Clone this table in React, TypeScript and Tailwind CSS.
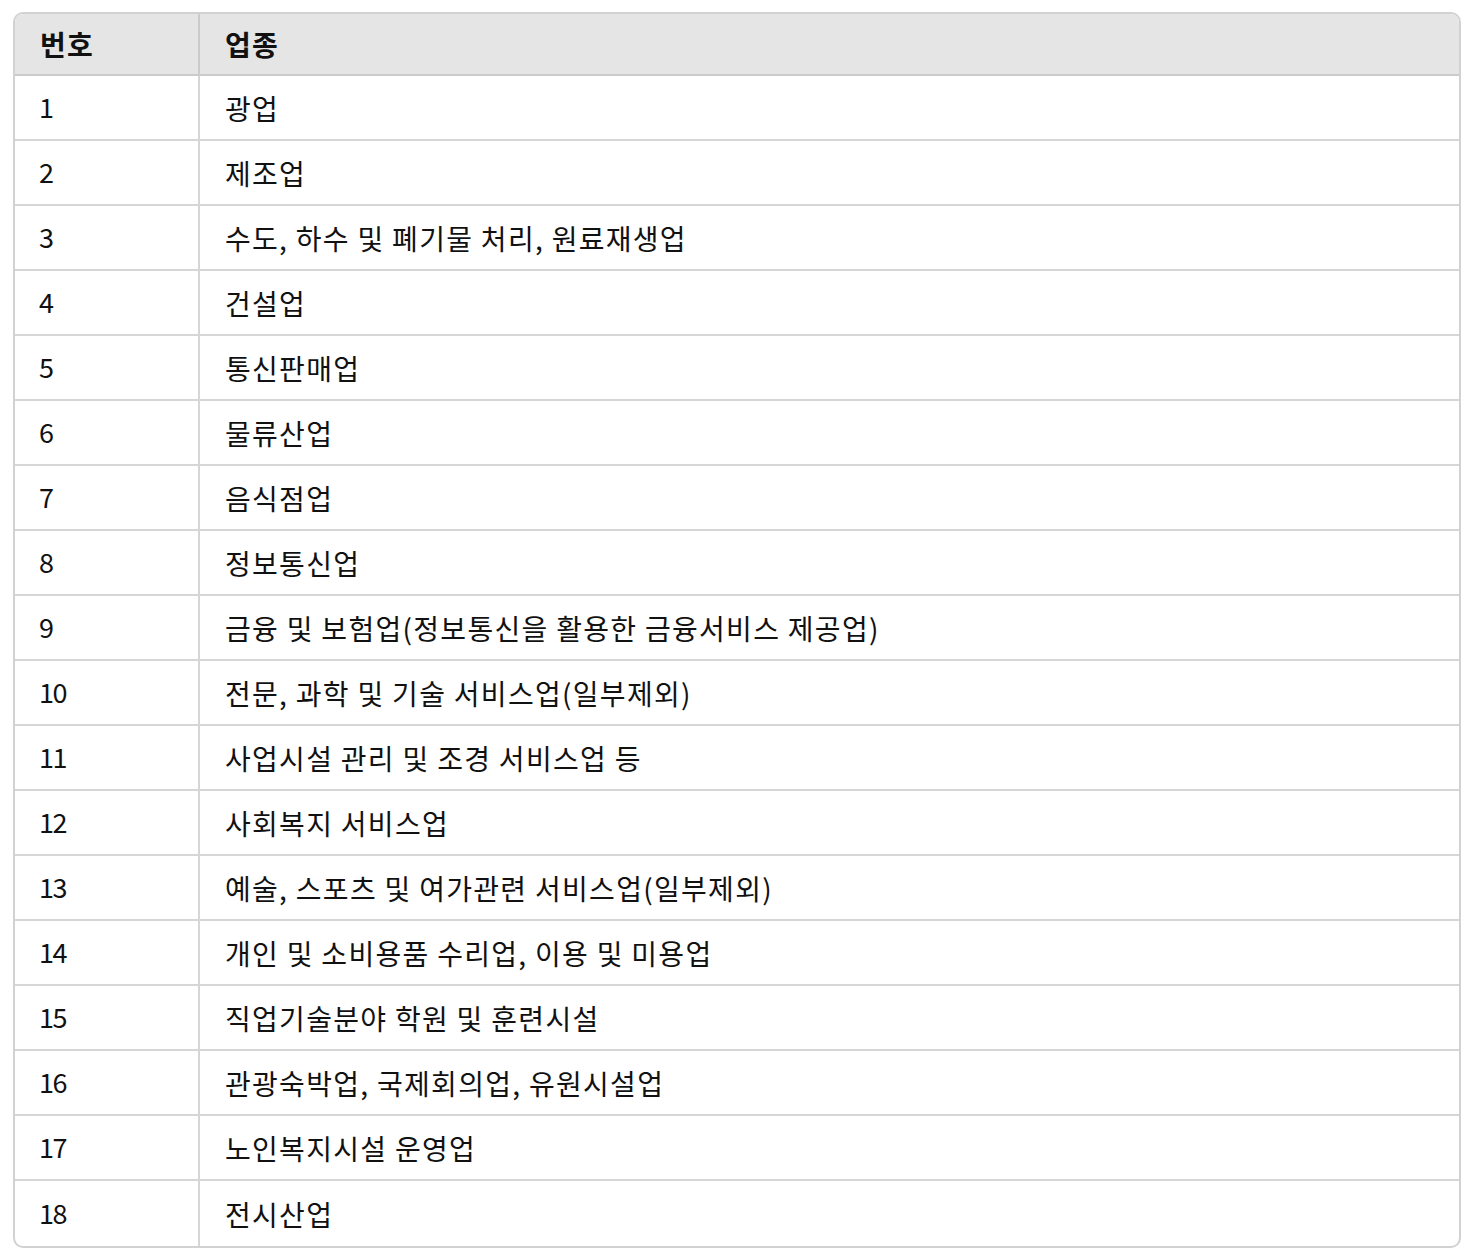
const rows = [
  "광업",
  "제조업",
  "수도, 하수 및 폐기물 처리, 원료재생업",
  "건설업",
  "통신판매업",
  "물류산업",
  "음식점업",
  "정보통신업",
  "금융 및 보험업(정보통신을 활용한 금융서비스 제공업)",
  "전문, 과학 및 기술 서비스업(일부제외)",
  "사업시설 관리 및 조경 서비스업 등",
  "사회복지 서비스업",
  "예술, 스포츠 및 여가관련 서비스업(일부제외)",
  "개인 및 소비용품 수리업, 이용 및 미용업",
  "직업기술분야 학원 및 훈련시설",
  "관광숙박업, 국제회의업, 유원시설업",
  "노인복지시설 운영업",
  "전시산업",
];

export default function App() {
  return (
    <div className="bg-white pl-[13px] pr-[10px] pt-[12px] pb-[8px] font-['Noto_Sans_CJK_KR',sans-serif] text-[#111]">
      <div className="overflow-hidden rounded-[10px] border-2 border-[#d2d2d2]">
        <table className="w-full border-separate border-spacing-0 text-[28px] tracking-[1.3px]">
          <thead>
            <tr className="bg-[#e5e5e5]">
              <th className="h-[62px] w-[185px] border-b-2 border-r-2 border-[#cbcbcb] pl-[25px] text-left font-bold">
                번호
              </th>
              <th className="h-[62px] border-b-2 border-[#cbcbcb] pl-[25px] text-left font-bold">
                업종
              </th>
            </tr>
          </thead>
          <tbody>
            {rows.map((name, i) => {
              const last = i === rows.length - 1;
              return (
                <tr key={name}>
                  <td
                    className={`h-[65px] border-r-2 border-[#d6d6d6] pl-[24px] text-[27px] tracking-[-1.5px] ${
                      last ? "" : "border-b-2"
                    }`}
                  >
                    {i + 1}
                  </td>
                  <td
                    className={`h-[65px] border-[#d6d6d6] pl-[25px] ${last ? "" : "border-b-2"}`}
                  >
                    {name}
                  </td>
                </tr>
              );
            })}
          </tbody>
        </table>
      </div>
    </div>
  );
}
